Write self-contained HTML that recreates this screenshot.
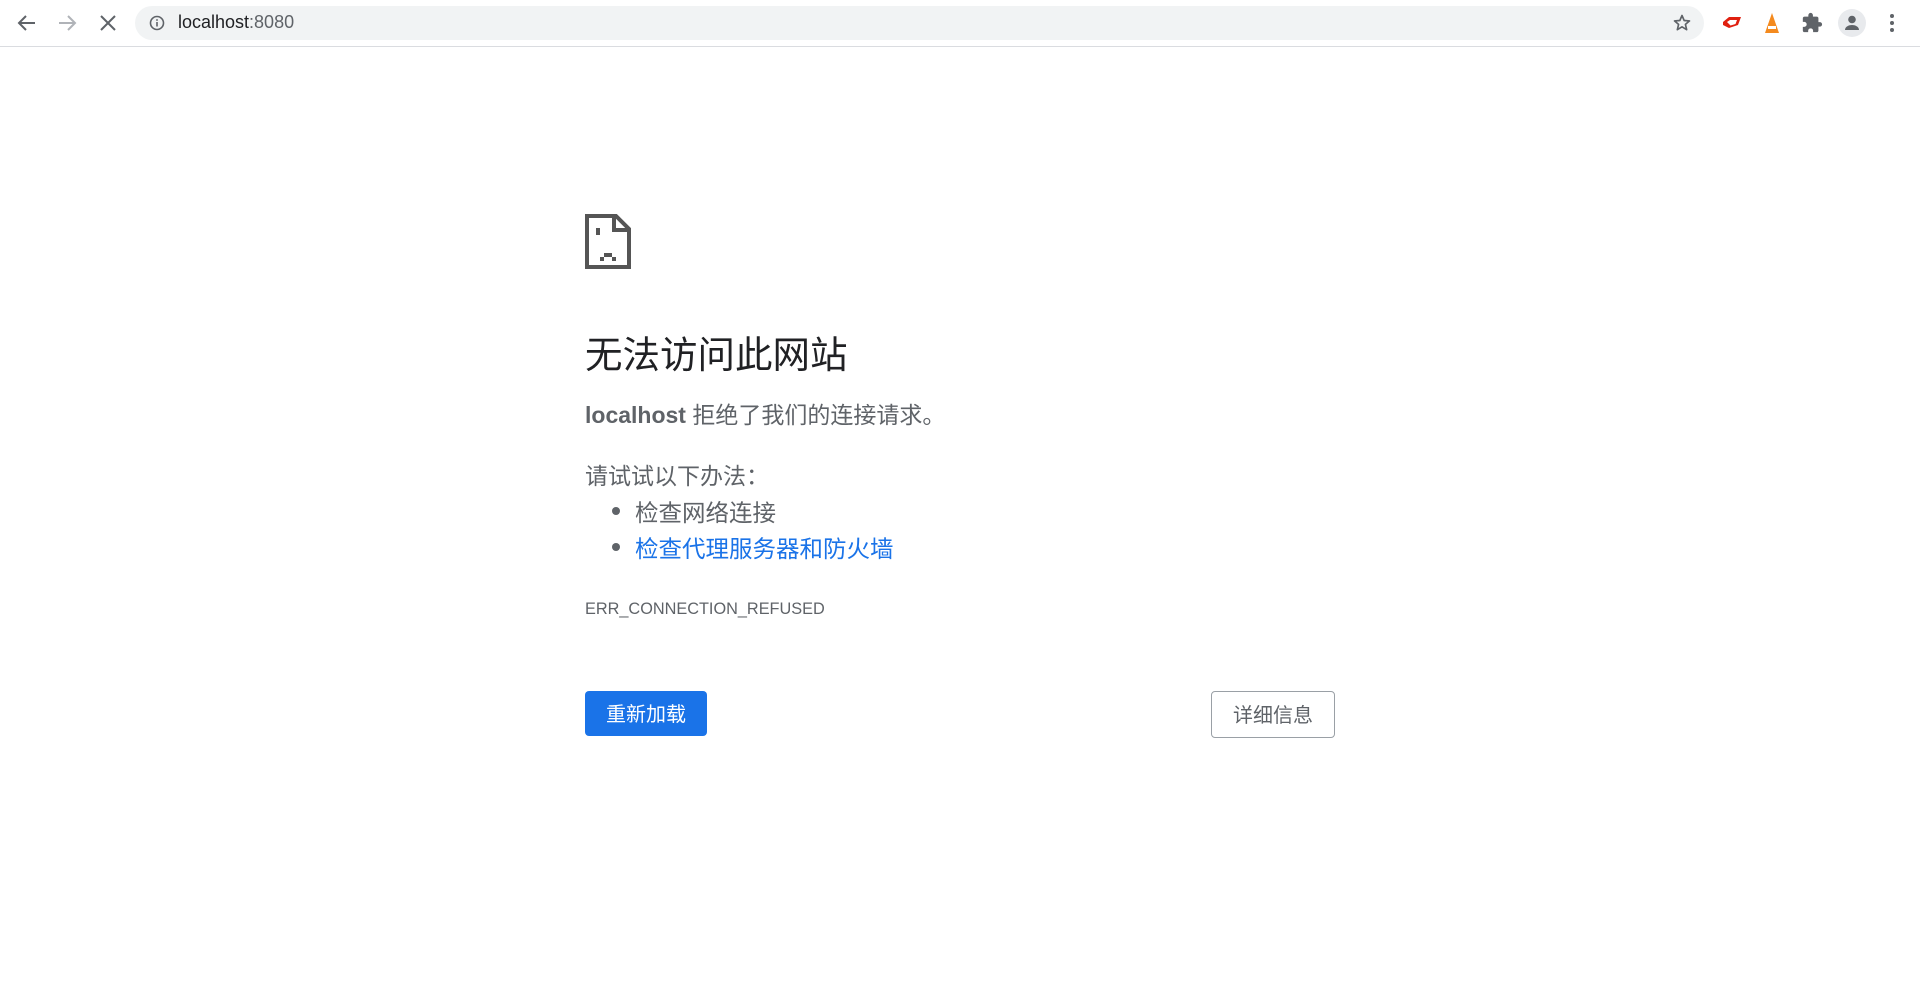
<!DOCTYPE html>
<html><head><meta charset="utf-8"><style>
*{margin:0;padding:0;box-sizing:border-box}
body{width:1920px;height:988px;background:#fff;font-family:"Liberation Sans","Noto Sans CJK SC",sans-serif;position:relative;overflow:hidden;color:#5f6368}
.bar{position:absolute;left:0;top:0;width:1920px;height:47px;background:#fff;border-bottom:1px solid #dadce0}
.omni{position:absolute;left:135px;top:6px;width:1569px;height:34px;border-radius:17px;background:#f1f3f4}
.url{position:absolute;left:178px;top:12px;font-size:18px;color:#202124}
.abs{position:absolute}
.t{position:absolute;left:585px;white-space:nowrap}
.btn{position:absolute;border-radius:4px;font-size:20px;text-align:center}
</style></head><body>
<div class="bar">
<svg class="abs" style="left:15px;top:11px" width="24" height="24" viewBox="0 0 24 24"><path d="M20 12H5M11 5l-7 7 7 7" stroke="#5f6368" stroke-width="2" fill="none"/></svg>
<svg class="abs" style="left:55px;top:11px" width="24" height="24" viewBox="0 0 24 24"><path d="M4 12h15M13 5l7 7-7 7" stroke="#b0b3b8" stroke-width="2" fill="none"/></svg>
<svg class="abs" style="left:96px;top:11px" width="24" height="24" viewBox="0 0 24 24"><path d="M5 5l14 14M19 5L5 19" stroke="#5f6368" stroke-width="2" fill="none"/></svg>
<div class="omni"></div>
<svg class="abs" style="left:149px;top:15px" width="16" height="16" viewBox="0 0 16 16"><circle cx="8" cy="8" r="6.5" stroke="#5f6368" stroke-width="1.6" fill="none"/><rect x="7.2" y="7" width="1.6" height="4.5" fill="#5f6368"/><rect x="7.2" y="4.2" width="1.6" height="1.6" fill="#5f6368"/></svg>
<div class="url">localhost<span style="color:#5f6368">:8080</span></div>
<svg class="abs" style="left:1672px;top:13px" width="20" height="20" viewBox="0 0 24 24"><path d="M12 3l2.6 6 6.4.5-4.9 4.2 1.5 6.3L12 16.6 6.4 20l1.5-6.3L3 9.5l6.4-.5z" stroke="#5f6368" stroke-width="2" fill="none" stroke-linejoin="round"/></svg>
<svg class="abs" style="left:1720px;top:13px" width="24" height="20" viewBox="0 0 24 20"><path d="M3 9l6-5h12l-3 8-9 3-6-3z" fill="#e02010"/><path d="M7 9l3-2h7l-1.5 4-5 1.5z" fill="#fff"/></svg>
<svg class="abs" style="left:1762px;top:11px" width="20" height="24" viewBox="0 0 20 24"><path d="M10 2l7 20H3z" fill="#f48a1e"/><path d="M6 15h8v3H6z" fill="#fff"/></svg>
<svg class="abs" style="left:1801px;top:12px" width="22" height="22" viewBox="0 0 24 24"><path d="M20.5 11H19V7a2 2 0 0 0-2-2h-4V3.5a2.5 2.5 0 0 0-5 0V5H4a2 2 0 0 0-2 2v3.8h1.5a2.7 2.7 0 0 1 0 5.4H2V20a2 2 0 0 0 2 2h3.8v-1.5a2.7 2.7 0 0 1 5.4 0V22H17a2 2 0 0 0 2-2v-4h1.5a2.5 2.5 0 0 0 0-5z" fill="#5f6368"/></svg>
<div class="abs" style="left:1838px;top:9px;width:28px;height:28px;border-radius:50%;background:#e8eaed"></div>
<svg class="abs" style="left:1842px;top:13px" width="20" height="20" viewBox="0 0 20 20"><circle cx="10" cy="6.5" r="3.8" fill="#5f6368"/><path d="M3 17c0-3.5 4-5 7-5s7 1.5 7 5z" fill="#5f6368"/></svg>
<svg class="abs" style="left:1886px;top:12px" width="12" height="22" viewBox="0 0 12 22"><circle cx="6" cy="4" r="2" fill="#5f6368"/><circle cx="6" cy="11" r="2" fill="#5f6368"/><circle cx="6" cy="18" r="2" fill="#5f6368"/></svg>
</div>
<svg class="abs" style="left:585px;top:214px" width="46" height="55" viewBox="0 0 46 55">
<path d="M2 2h29l13 13v38H2z" fill="none" stroke="#555" stroke-width="4"/>
<path d="M29 2v14h15" fill="none" stroke="#555" stroke-width="4"/>
<rect x="11" y="14" width="4" height="7" fill="#555"/>
<rect x="15" y="43" width="4" height="4" fill="#555"/><rect x="19" y="39" width="8" height="4" fill="#555"/><rect x="27" y="43" width="4" height="4" fill="#555"/>
</svg>
<div class="t" style="top:324px;font-size:37.5px;color:#202124">无法访问此网站</div>
<div class="t" style="top:396px;font-size:23px"><b>localhost</b> 拒绝了我们的连接请求。</div>
<div class="t" style="top:457px;font-size:23px">请试试以下办法：</div>
<div class="abs" style="left:612px;top:507px;width:8px;height:8px;border-radius:50%;background:#5f6368"></div>
<div class="abs" style="left:612px;top:543px;width:8px;height:8px;border-radius:50%;background:#5f6368"></div>
<div class="t" style="left:635px;top:494px;font-size:23.5px">检查网络连接</div>
<div class="t" style="left:635px;top:530px;font-size:23.5px;color:#1a73e8">检查代理服务器和防火墙</div>
<div class="t" style="top:600px;font-size:16.3px">ERR_CONNECTION_REFUSED</div>
<div class="btn" style="left:585px;top:691px;width:122px;height:45px;background:#1a73e8;color:#fff;line-height:48px">重新加载</div>
<div class="btn" style="left:1211px;top:691px;width:124px;height:47px;border:1px solid #9aa0a6;color:#5f6368;line-height:48px">详细信息</div>
</body></html>
